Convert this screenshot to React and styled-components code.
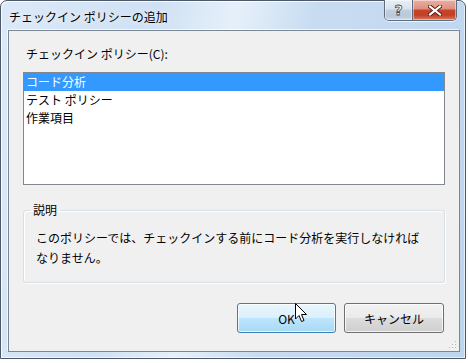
import React from "react";
import styled, { createGlobalStyle } from "styled-components";

const GlobalStyle = createGlobalStyle`
  html, body {
    margin: 0;
    padding: 0;
    background: #ffffff;
  }
  body {
    font-family: "Noto Sans CJK JP", "Noto Sans", sans-serif;
    font-size: 12px;
    color: #000;
  }
`;

const Window = styled.div`
  position: relative;
  box-sizing: border-box;
  width: 466px;
  height: 359px;
  display: flex;
  flex-direction: column;
  padding: 0 5px 6px 7px;
  border: 1px solid #4d5869;
  border-radius: 7px 7px 0 0;
  background: linear-gradient(
    100deg,
    #dce9f7 0%,
    #cfe1f4 30%,
    #e6f0fa 45%,
    #c8dcf1 60%,
    #bed5ee 100%
  );
  box-shadow: inset 1px 1px 0 rgba(255, 255, 255, 0.8),
    inset -1px -1px 0 rgba(255, 255, 255, 0.6);
`;

const TitleBar = styled.div`
  height: 29px;
  display: flex;
  align-items: flex-start;
  justify-content: space-between;
`;

const Title = styled.div`
  padding: 8px 0 0 1px;
  line-height: 16px;
  font-size: 12px;
  color: #000;
  text-shadow: 0 0 6px rgba(255, 255, 255, 0.9);
`;

const CaptionButtons = styled.div`
  display: flex;
  margin-right: 3px;
  margin-top: -1px;
  border: 1px solid #5e6b7c;
  border-top: none;
  border-radius: 0 0 5px 5px;
  overflow: hidden;
  box-shadow: 0 1px 0 rgba(255, 255, 255, 0.7);
`;

const CaptionButton = styled.div`
  width: ${(p) => p.$w}px;
  height: 20px;
  display: flex;
  align-items: center;
  justify-content: center;
  background: ${(p) =>
    p.$close
      ? "linear-gradient(180deg, #e9b0a3 0%, #dd8f7f 45%, #c6452c 50%, #c23f26 75%, #d97a5f 100%)"
      : "linear-gradient(180deg, #e8eef5 0%, #d9e3ee 45%, #c1cfde 50%, #b9c9da 80%, #cfdbe8 100%)"};
  border-left: ${(p) => (p.$close ? "1px solid #5e6b7c" : "none")};
  box-shadow: inset 0 0 0 1px rgba(255, 255, 255, 0.45);
`;

const HelpGlyph = styled.span`
  font-family: "DejaVu Sans", sans-serif;
  font-weight: bold;
  font-size: 14px;
  line-height: 14px;
  color: #ffffff;
  -webkit-text-stroke: 0.8px #3d4b5c;
  margin-top: -1px;
`;

const Client = styled.div`
  position: relative;
  flex: 1;
  display: flex;
  flex-direction: column;
  border: 1px solid #7b8795;
  background: #f0f0f0;
  box-shadow: -1px -1px 0 rgba(255, 255, 255, 0.7);
`;

const FieldLabel = styled.div`
  margin: 15px 0 0 17px;
  line-height: 16px;
`;

const ListBox = styled.div`
  box-sizing: border-box;
  height: 113px;
  margin: 10px 14px 0;
  border: 1px solid #828790;
  background: #ffffff;
`;

const ListItem = styled.div`
  height: 18px;
  line-height: 18px;
  padding-left: 2px;
  background: ${(p) => (p.$selected ? "#3399ff" : "transparent")};
  color: ${(p) => (p.$selected ? "#ffffff" : "#000000")};
`;

const Group = styled.fieldset`
  margin: 17px 14px 0;
  padding: 0 10px 14px 6px;
  border: 1px solid #d5dfe5;
  border-radius: 3px;
  box-shadow: inset 1px 1px 0 #ffffff, 1px 1px 0 #ffffff;
`;

const Legend = styled.legend`
  padding: 0 3px;
  line-height: 16px;
`;

const Description = styled.p`
  margin: 10px 0 0 6px;
  line-height: 20px;
`;

const ButtonRow = styled.div`
  display: flex;
  justify-content: flex-end;
  gap: 8px;
  margin: 20px 15px 0 0;
`;

const Button = styled.div`
  box-sizing: border-box;
  width: ${(p) => p.$w}px;
  height: 30px;
  display: flex;
  align-items: center;
  justify-content: center;
  border-radius: 3px;
  border: 1px solid ${(p) => (p.$default ? "#3c7fb1" : "#707070")};
  background: ${(p) =>
    p.$default
      ? "linear-gradient(180deg, #eaf6fd 0%, #d9f0fc 50%, #bee6fd 50%, #a7d9f5 100%)"
      : "linear-gradient(180deg, #f2f2f2 0%, #ebebeb 50%, #dddddd 50%, #cfcfcf 100%)"};
  box-shadow: inset 0 0 0 1px rgba(255, 255, 255, 0.75);
`;

const Grip = styled.svg`
  position: absolute;
  right: 2px;
  bottom: 2px;
`;

const Cursor = styled.svg`
  position: absolute;
  left: 293px;
  top: 301px;
`;

export default function App() {
  return (
    <>
      <GlobalStyle />
      <Window>
        <TitleBar>
          <Title>チェックイン ポリシーの追加</Title>
          <CaptionButtons>
            <CaptionButton $w={27}>
              <HelpGlyph>?</HelpGlyph>
            </CaptionButton>
            <CaptionButton $w={43} $close>
              <svg width="14" height="11" viewBox="0 0 14 11">
                <path
                  d="M2 1.5 L12 9.5 M12 1.5 L2 9.5"
                  stroke="#5a1a10"
                  strokeWidth="4"
                  strokeLinecap="square"
                />
                <path
                  d="M2 1.5 L12 9.5 M12 1.5 L2 9.5"
                  stroke="#ffffff"
                  strokeWidth="2.2"
                  strokeLinecap="square"
                />
              </svg>
            </CaptionButton>
          </CaptionButtons>
        </TitleBar>
        <Client>
          <FieldLabel>チェックイン ポリシー(C):</FieldLabel>
          <ListBox>
            <ListItem $selected>コード分析</ListItem>
            <ListItem>テスト ポリシー</ListItem>
            <ListItem>作業項目</ListItem>
          </ListBox>
          <Group>
            <Legend>説明</Legend>
            <Description>
              このポリシーでは、チェックインする前にコード分析を実行しなければ
              <br />
              なりません。
            </Description>
          </Group>
          <ButtonRow>
            <Button $w={99} $default>
              OK
            </Button>
            <Button $w={100}>キャンセル</Button>
          </ButtonRow>
          <Grip width="8" height="8" viewBox="0 0 8 8">
            <rect x="6" y="0" width="1" height="1" fill="#b8b8b8" />
            <rect x="3" y="3" width="1" height="1" fill="#b8b8b8" />
            <rect x="6" y="3" width="1" height="1" fill="#b8b8b8" />
            <rect x="0" y="6" width="1" height="1" fill="#b8b8b8" />
            <rect x="3" y="6" width="1" height="1" fill="#b8b8b8" />
            <rect x="6" y="6" width="1" height="1" fill="#b8b8b8" />
          </Grip>
        </Client>
        <Cursor width="14" height="22" viewBox="0 0 14 22">
          <path
            d="M1.5 1.5 L1.5 17 L5 13.5 L7.5 19.5 L10 18.5 L7.5 12.5 L12.5 12.5 Z"
            fill="#ffffff"
            stroke="#000000"
            strokeWidth="1"
            strokeLinejoin="miter"
          />
        </Cursor>
      </Window>
    </>
  );
}
